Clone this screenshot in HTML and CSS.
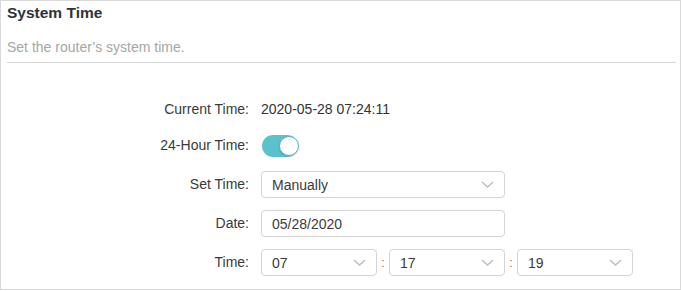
FILE: index.html
```html
<!DOCTYPE html>
<html>
<head>
<meta charset="utf-8">
<link rel="stylesheet" href="styles.css">
</head>
<body>
<div class="card">
  <div class="header">
    <h2 class="title">System Time</h2>
    <p class="subtitle">Set the router’s system time.</p>
  </div>
  <div class="form">
    <div class="label first">Current Time:</div>
    <div class="value text first">2020-05-28 07:24:11</div>

    <div class="label">24-Hour Time:</div>
    <div class="value"><span class="toggle"><span class="knob"></span></span></div>

    <div class="label">Set Time:</div>
    <div class="value"><div class="select wide"><span>Manually</span><svg class="chev" width="13" height="7" viewBox="0 0 13 7"><path d="M1 1l5.5 5 5.5-5" fill="none" stroke="#bdbdbd" stroke-width="1.5"/></svg></div></div>

    <div class="label">Date:</div>
    <div class="value"><div class="input wide">05/28/2020</div></div>

    <div class="label">Time:</div>
    <div class="value times">
      <div class="select small"><span>07</span><svg class="chev" width="13" height="7" viewBox="0 0 13 7"><path d="M1 1l5.5 5 5.5-5" fill="none" stroke="#bdbdbd" stroke-width="1.5"/></svg></div>
      <span class="sep">:</span>
      <div class="select small"><span>17</span><svg class="chev" width="13" height="7" viewBox="0 0 13 7"><path d="M1 1l5.5 5 5.5-5" fill="none" stroke="#bdbdbd" stroke-width="1.5"/></svg></div>
      <span class="sep">:</span>
      <div class="select small"><span>19</span><svg class="chev" width="13" height="7" viewBox="0 0 13 7"><path d="M1 1l5.5 5 5.5-5" fill="none" stroke="#bdbdbd" stroke-width="1.5"/></svg></div>
    </div>
  </div>
</div>
</body>
</html>
```

FILE: styles.css
```css
* { box-sizing: border-box; }
html, body { margin: 0; padding: 0; background: #fff; }
body {
  font-family: "Liberation Sans", Arial, sans-serif;
  font-size: 14px;
  color: #333;
}
.card {
  width: 681px;
  height: 290px;
  border: 1px solid #d9d9d9;
  background: #fff;
}
.header {
  margin: 0 4px 0 6px;
  padding-bottom: 5px;
  border-bottom: 1px solid #d6d6d6;
}
.title {
  margin: 0;
  font-size: 15.5px;
  font-weight: bold;
  line-height: 24px;
  color: #2f3338;
}
.subtitle {
  margin: 12px 0 0;
  line-height: 20px;
  color: #a6a6a6;
}
.form {
  display: grid;
  grid-template-columns: 248px 1fr;
  column-gap: 12px;
  row-gap: 12px;
  padding-top: 30px;
  grid-auto-rows: 27px;
}
.label {
  text-align: right;
  line-height: 27px;
  color: #3a3a3a;
}
.first { padding-top: 3px; }
.value { display: flex; align-items: center; }
.value.text { line-height: 27px; color: #333; align-items: flex-start; }
.toggle {
  position: relative;
  display: inline-block;
  width: 36px;
  height: 22px;
  border-radius: 11px;
  background: #5bc2cd;
  margin-left: 1px;
}
.knob {
  position: absolute;
  right: -1px;
  top: 1px;
  width: 20px;
  height: 20px;
  border-radius: 50%;
  background: #fff;
  border: 1px solid #4fb6c2;
  box-shadow: 0 1px 2px rgba(0,0,0,0.15);
}
.select, .input {
  height: 27px;
  border: 1px solid #d4d4d4;
  border-radius: 4px;
  padding: 0 10px;
  display: flex;
  align-items: center;
  justify-content: space-between;
  color: #3b3b3b;
}
.wide { width: 244px; }
.small { width: 116px; }
.chev { display: block; }
.times { gap: 0; }
.sep {
  width: 12px;
  text-align: center;
  color: #8a7b6b;
  font-size: 13px;
}
```
